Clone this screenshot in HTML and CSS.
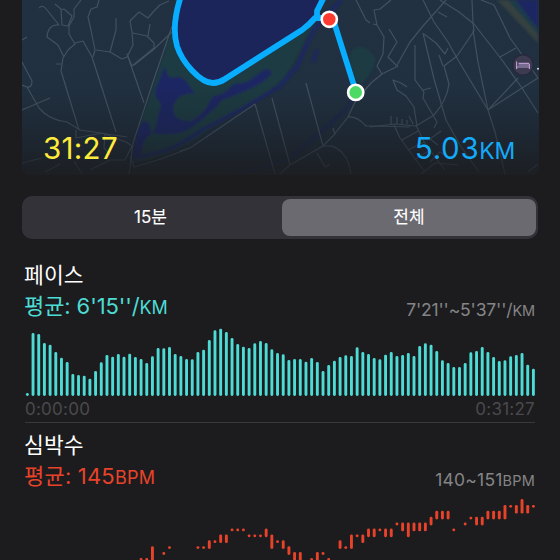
FILE: index.html
```html
<!DOCTYPE html>
<html lang="ko">
<head>
    <meta charset="UTF-8">
    <meta name="viewport" content="width=device-width, initial-scale=1.0">
    <title>러닝 기록</title>
    <link rel="stylesheet" href="styles.css">
</head>
<body>

    <div class="container">
        <div class="map">
            <svg class="map-canvas" viewBox="22 0 517 175" width="517" height="175">
                <defs>
                    <linearGradient id="land" x1="0" y1="0" x2="0" y2="1">
                        <stop offset="0" stop-color="#213142"/>
                        <stop offset="0.55" stop-color="#203040"/>
                        <stop offset="1" stop-color="#1e2a36"/>
                    </linearGradient>
                    <linearGradient id="fade" x1="0" y1="0" x2="0" y2="1">
                        <stop offset="0" stop-color="#1c1c1e" stop-opacity="0"/>
                        <stop offset="0.5" stop-color="#1a1d24" stop-opacity="0.3"/>
                        <stop offset="1" stop-color="#1c1c1e" stop-opacity="0.8"/>
                    </linearGradient>
                    <filter id="soft"><feGaussianBlur stdDeviation="0.8"/></filter>
                </defs>
                <rect x="22" y="0" width="517" height="175" fill="url(#land)"/>

                <!-- park and water -->
                <g filter="url(#soft)">
                    <path fill="#1c3b43" d="M176 20L170 34L157 76L144 113L134 145L132 163C160 158 185 148 208 130L252 104L284 78L296 58L306 38L318 18L310 0H176Z"/>
                    <path fill="#1c2863" d="M165 66C166 76 170 80 177 77C186 76 189 88 196 94C185 92 174 98 173 108C174 120 182 121 192 121L202 113C208 108 211 97 214 96C224 96 230 87 236 83C247 86 254 76 264 70C271 68 275 73 266 79C256 88 243 91 233 96C225 100 221 98 219 104C211 112 198 124 186 131C173 136 160 134 152 133C144 139 142 145 142 153L132 156L138 130C144 116 150 120 151 133C159 130 156 116 161 107C160 98 153 99 156 88C160 80 161 75 165 66Z"/>
                    <path fill="none" stroke="#1c2863" stroke-width="3.5" d="M132 158C165 153 180 146 202 130L240 110L279 87L298 65L307 44L315 28L341 0"/>
                    <path fill="none" stroke="#1c2863" stroke-width="3" d="M317 50L313 62"/>
                    <path fill="#1b3b43" d="M352 50C360 43 371 49 375 58C376 67 368 78 361 84L354 78C349 65 348 59 352 50Z"/>
                    <path fill="#34413f" d="M497 0H514L538 32V43Z"/>
                    <path fill="#1c3b4a" d="M508 0H516L538 29V34Z"/>
                    <path fill="#1c2863" d="M516 0H538V29Z"/>
                    <path fill="none" stroke="#1d2758" stroke-width="1.6" d="M355 98C338 120 320 132 304 146L288 160L238 174"/>
                </g>
                <path fill="#1b2559" d="M181 0C174 20 171 35 178 48C186 66 201 88 222 81L302 31L315 17L324 0Z"/>

                <!-- roads -->
                <g class="roads">
                    <path d="M39 8Q43 4 47 10L59 25Q48 24 47 37L58 45L64 57"/>
                    <path d="M55 4L61 9L62 25L68 26L72 16L64 9L61 10"/>
                    <path d="M81 0L74 9V17L69 26V34L75 44L68 50L63 58L61 71L65 84L79 130"/>
                    <path d="M75 43L83 41L92 57L116 132"/>
                    <path d="M99 0L97 7L91 9L88 17L91 30L95 50L93 57"/>
                    <path d="M96 50L110 52L122 59L127 57L133 45L132 32L130 21L139 12L148 18L154 11L160 5L169 1"/>
                    <path d="M110 52L116 30V18"/>
                    <path d="M133 33L147 36L154 43V48L132 66L127 54L144 103"/>
                    <path d="M148 36L150 24M173 31L153 50L134 65"/>
                    <path d="M172 26L152 85L133 143L129 174"/>
                    <path d="M22 62L32 81Q32 88 27 87L22 85M27 87L39 108Q49 120 67 122L80 130L127 137M22 110L50 98"/>
                    <path d="M22 163L42 158M76 130V138L102 133L126 142L132 146L125 160H110L90 170M74 161L82 174M45 172L60 164M105 134L104 148L110 155"/>
                    <path d="M56 64H62M22 40L27 37M130 156L134 167L161 159L190 148"/>
                    <path d="M180 151L190 148L255 104L275 174M272 98L290 165M306 83L323 146"/>
                    <path d="M280 174L290 165L323 146L333 136L348 117L355 102L371 83L382 74L396 67L410 42L423 26L446 0"/>
                    <path d="M348 117Q357 116 366 126L375 126L410 127M323 146L332 146Q348 152 351 174M317 153L325 167L330 164M335 135L333 128"/>
                    <path d="M356 0L366 20L370 23"/>
                    <path d="M370 127L395 124L416 126L434 115Q447 100 449 84L444 66L457 56L474 31L473 23L472 0"/>
                    <path d="M391 0L380 9L374 10L377 25L384 37L383 54L377 66L382 74M373 24L377 25M389 29L397 42L388 57L398 67M423 0L434 22L448 42L458 60L488 110"/>
                    <path d="M423 33L434 79L446 120L460 145L479 172M424 34L436 43L445 54L448 48M439 55L443 66M415 45V80L424 92L423 98L437 122L434 128M423 90L431 88"/>
                    <path d="M440 0L459 12L474 24L502 60L522 88L538 113M473 30L478 62L488 110L518 78M488 110L495 132L505 174"/>
                    <path d="M481 0L494 5L510 38L518 49L538 78L522 88L488 110M500 57L516 48M438 12L447 17"/>
                    <path d="M394 125L400 138L416 160L425 172M416 125L423 140L435 157L445 170M402 140L418 131M408 150L424 142M414 160L430 150M441 131L430 139L438 145M391 124V116M397 124V117M402 124V119M407 124V120M413 124L409 116M417 126L414 107L406 96L397 90L393 80L401 83L407 87M528 172L538 164"/>
                    <path d="M430 162L440 152L449 158M421 174L435 163L458 165"/>
                </g>

                <rect x="22" y="85" width="517" height="90" fill="url(#fade)"/>

                <!-- running route -->
                <g class="route">
                    <path d="M181 -4C175 14 173 32 177 46C182 62 200 83 213 83C219 83 222 81 225 79L302 30Q309 25 315 18"/>
                    <path d="M324 -3L317 11V18H329"/>
                    <path d="M333 19L356 92"/>
                </g>
                <circle cx="329.3" cy="19.3" r="7.6" fill="#ff3b30" stroke="#fff" stroke-width="2.6"/>
                <circle cx="355.7" cy="92.4" r="7.6" fill="#4cd964" stroke="#fff" stroke-width="2.6"/>

                <!-- hotel pin -->
                <circle cx="523" cy="65" r="11" fill="#28293c"/>
                <circle cx="523" cy="65" r="9.5" fill="#3d3b50"/>
                <path fill="none" stroke="#b69ccd" stroke-width="1.2" d="M516.6 61.5V69M529.4 69V63.8M516.6 67H529.4M518.5 65H529.4M518.5 63.3H529"/>
                <circle cx="538" cy="68.7" r="1" fill="#d9dce2"/>
            </svg>
            <div class="map-info">
                <span class="duration">31:27</span>
                <span class="distance">5.03<small>KM</small></span>
            </div>
        </div>

        <div class="tabs">
            <div class="tab">15분</div>
            <div class="tab active">전체</div>
        </div>

        <div class="section pace">
            <h2>페이스</h2>
            <div class="summary">
                <span class="average">평균: 6'15''/<small>KM</small></span>
                <span class="range">7'21''~5'37''/<small>KM</small></span>
            </div>
            <svg class="chart" id="pace-chart" width="510" height="74"></svg>
            <div class="axis">
                <span>0:00:00</span>
                <span>0:31:27</span>
            </div>
        </div>

        <div class="section heart">
            <h2>심박수</h2>
            <div class="summary">
                <span class="average">평균: 145<small>BPM</small></span>
                <span class="range">140~151<small>BPM</small></span>
            </div>
            <svg class="chart" id="heart-chart" width="510" height="80"></svg>
        </div>
    </div>

    <script>
    const pace = [
        3, 63, 62, 53, 51.3, 44, 38.3, 34, 22, 21, 20.3, 17.3, 25, 33.7, 41,
        39.3, 42, 39.3, 42.3, 39, 37, 33, 39.7, 48, 47.7, 49, 42, 40, 37, 36.7,
        44, 46.3, 56, 65.7, 67.3, 64, 58, 52, 49.3, 48, 52.7, 55, 53, 46.7, 43,
        41.7, 36, 37, 37, 34.3, 38, 34, 25, 31, 35.3, 39, 40.7, 40, 48.7, 44,
        42, 38, 36.7, 41.3, 44, 40, 41, 43, 40, 50, 52.7, 51.3, 45, 35.7, 33,
        29, 29, 33, 43.7, 45, 49, 44, 39, 35, 35.7, 39.7, 41, 43, 31.3, 27.3
    ];

    // [index, highest bpm, lowest bpm]
    const heart = [
        [20, 141, 140], [21, 141, 140], [22, 143, 140], [24, 142, 142], [25, 143, 143],
        [30, 143, 143], [31, 143, 143], [32, 144, 143], [33, 144, 144], [34, 145, 144],
        [35, 145, 144], [36, 146, 146], [37, 146, 146], [38, 146, 146], [39, 145, 145],
        [40, 145, 145], [41, 145, 145], [42, 146, 145], [43, 145, 143], [44, 144, 144],
        [45, 144, 143], [46, 143, 142], [47, 142, 140], [48, 142, 140], [50, 141, 141],
        [51, 142, 140], [52, 142, 142], [53, 141, 141], [55, 144, 143], [56, 143, 143],
        [57, 145, 143], [58, 145, 145], [59, 145, 144], [60, 146, 145], [61, 146, 145],
        [62, 146, 146], [63, 146, 145], [64, 146, 145], [65, 147, 147], [66, 147, 146],
        [67, 147, 145], [68, 147, 146], [69, 147, 146], [70, 147, 146], [71, 148, 147],
        [72, 149, 148], [73, 149, 148], [74, 149, 148], [75, 146, 146], [77, 147, 147],
        [78, 148, 148], [79, 148, 147], [80, 148, 147], [81, 149, 148], [82, 149, 148],
        [83, 149, 148], [84, 150, 148], [85, 150, 150], [86, 150, 149], [87, 151, 149],
        [88, 150, 149], [89, 150, 150]
    ];

    const barWidth = 2.9;
    const barGap = 5.686;
    const step = 5.9;

    function addBar(chart, index, top, height) {
        const bar = document.createElementNS("http://www.w3.org/2000/svg", "rect");
        bar.setAttribute("x", 0.9 + index * barGap);
        bar.setAttribute("y", top);
        bar.setAttribute("width", barWidth);
        bar.setAttribute("height", height);
        bar.setAttribute("rx", Math.min(1.4, height / 2));
        chart.appendChild(bar);
    }

    const paceChart = document.getElementById("pace-chart");
    pace.forEach((value, i) => addBar(paceChart, i, 74 - value, value));

    const heartChart = document.getElementById("heart-chart");
    heart.forEach(([i, high, low]) => {
        addBar(heartChart, i, (151 - high) * step, (high - low) * step + 2.8);
    });
    </script>
</body>
</html>
```
FILE: styles.css
```css
* {
    margin: 0;
    padding: 0;
    box-sizing: border-box;
}

body {
    height: 560px;
    overflow: hidden;
    background: #1c1c1e;
    color: white;
    font-family: Inter, "Noto Sans CJK KR", sans-serif;
}

.container {
    width: 560px;
    padding: 0 22px;
}

.map {
    display: grid;
    width: 517px;
    height: 175px;
    border-radius: 0 0 8px 8px;
    overflow: hidden;
}

.map-canvas,
.map-info {
    grid-area: 1 / 1;
}

.roads path {
    fill: none;
    stroke: #425160;
    stroke-width: 1.2;
    stroke-linejoin: round;
}

.route path {
    fill: none;
    stroke: #08adff;
    stroke-width: 5.8;
    stroke-linecap: round;
    stroke-linejoin: round;
}

.map-info {
    z-index: 1;
    display: flex;
    justify-content: space-between;
    align-items: baseline;
    padding: 130px 24px 0 21px;
    font-size: 29.5px;
    line-height: 36px;
    letter-spacing: 0.3px;
}

.duration {
    color: #ffeb3b;
}

.distance {
    color: #14aafa;
    letter-spacing: 0.7px;
}

.distance small {
    font-size: 23px;
    letter-spacing: -0.3px;
}

.tabs {
    display: flex;
    width: 516px;
    height: 43px;
    margin-top: 21px;
    padding: 3px 2px;
    border-radius: 10px;
    background: #333238;
}

.tab {
    width: 258px;
    border-radius: 8px;
    font-size: 17px;
    -webkit-text-stroke: 0.1px white;
    line-height: 37px;
    text-align: center;
}

.tab.active {
    width: 254px;
    background: #6b6a71;
}

.tab:first-child {
    padding-right: 5px;
}

.section {
    width: 510px;
    margin-left: 3px;
}

.pace {
    margin-top: 21px;
    border-bottom: 1px solid #39393b;
}

.heart {
    margin-top: 7px;
}

h2 {
    height: 30px;
    margin-left: -1px;
    font-size: 21.5px;
    font-weight: 400;
    line-height: 30px;
    letter-spacing: 0.1px;
}

.summary {
    display: flex;
    justify-content: space-between;
    height: 32px;
    line-height: 32px;
}

.average {
    margin-left: -1px;
    font-size: 22px;
}

.average small {
    font-size: 18px;
}

.range {
    padding-top: 4px;
    color: #858587;
    font-size: 17.5px;
}

.range small {
    font-size: 14.5px;
}

.pace .average {
    color: #4ddbd5;
    letter-spacing: -0.1px;
}

.pace .range {
    letter-spacing: -0.15px;
}

.heart .average {
    color: #e8432a;
    letter-spacing: 0.2px;
}

.heart .range {
    letter-spacing: 0.2px;
}

.chart {
    display: block;
}

#pace-chart {
    fill: #4ddbd5;
}

#heart-chart {
    margin-top: 6.5px;
    fill: #e8432a;
}

.axis {
    display: flex;
    justify-content: space-between;
    height: 26px;
    color: #4a4a4c;
    font-size: 17px;
    line-height: 26px;
    letter-spacing: 0.25px;
}
```
